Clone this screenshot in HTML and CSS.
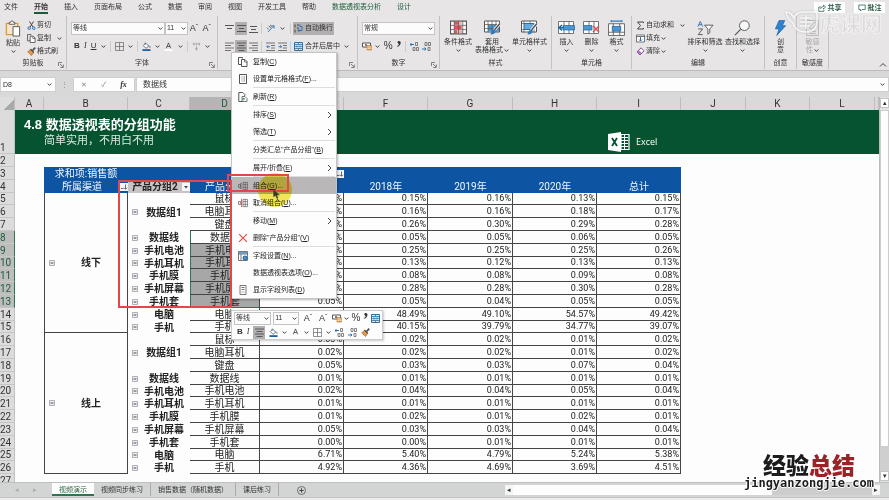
FILE: index.html
```html
<!DOCTYPE html>
<html lang="zh-CN">
<head>
<meta charset="utf-8">
<title>4.8 数据透视表的分组功能</title>
<link rel="stylesheet" href="styles.css">
</head>
<body>
<svg class="defs" aria-hidden="true">
  <symbol id="caret" viewBox="0 0 5 5"><path d="M.7 1.5 2.5 3.4 4.3 1.5" fill="none" stroke="#444" stroke-width="1"/></symbol>
  <symbol id="chev" viewBox="0 0 6 8"><path d="M1.5 1 4.5 4 1.5 7" fill="none" stroke="#444"/></symbol>
  <symbol id="launch" viewBox="0 0 6 6"><path d="M.5 4V.5H4M2 2l3 3M5.300 2.500v3h-3" fill="none" stroke="#666" stroke-width=".8"/></symbol>
  <symbol id="paste" viewBox="0 0 18 18"><path d="M2 3.500h12v12H2z" fill="#f5e6cf" stroke="#d99a3d" stroke-width="1.400"/><path d="M5 4.500V2.500h1.500a1.500 1.500 0 0 1 3 0H11v2z" fill="#fff" stroke="#555"/><path d="M9 7h7v10H9z" fill="#fff" stroke="#555"/></symbol>
  <symbol id="cut" viewBox="0 0 9 9"><path d="M2.500.5 6 6M6.500.5 3 6" stroke="#444" stroke-width="1"/><circle cx="2.200" cy="7.200" r="1.300" fill="none" stroke="#2b74b8"/><circle cx="6.800" cy="7.200" r="1.300" fill="none" stroke="#2b74b8"/></symbol>
  <symbol id="copy" viewBox="0 0 10 10"><path d="M4 7.500H.5v-7h4v1" fill="none" stroke="#555"/><path d="M3.500 2.500H7l2 2v5H3.500z" fill="#fff" stroke="#555"/><path d="M6.500 2.500V5H9" fill="none" stroke="#555" stroke-width=".8"/></symbol>
  <symbol id="brush" viewBox="0 0 10 10"><path d="m9.200.8-3 3" stroke="#555" stroke-width="2"/><path d="M4 2.500 7.500 6 5 9.500.8 5.500z" fill="#e39a4b" stroke="#9d5a21" stroke-width=".7"/><path d="M4 2.500 7.500 6" stroke="#444" stroke-width="1.300"/></symbol>
  <symbol id="grid" viewBox="0 0 10 10"><path d="M.5.5h9v9h-9zM5 .5v9M.5 5h9" fill="none" stroke="#666" stroke-width=".8"/></symbol>
  <symbol id="bucket" viewBox="0 0 10 10"><path d="M4 1.300 7.500 4.500 4.500 7 1.500 4z" fill="#fff" stroke="#444" stroke-width=".8"/><path d="M3.500 3V.8M8 4q1.500 1.500.8 2.500" fill="none" stroke="#2b74b8"/><path d="M.5 8h9v2h-9z" fill="#1c5ca8"/></symbol>
  <symbol id="fontcolor" viewBox="0 0 10 10"><path d="M2.500 7 5 1l2.500 6M3.300 5h3.400" fill="none" stroke="#444" stroke-width=".9"/><path d="M.5 8h9v2h-9z" fill="#fff"/></symbol>
  <symbol id="phonetic" viewBox="0 0 10 10"><path d="M1 3h2M4 3h2M7 3h2M1 1.500h2M4 1.500h2M7 1.500h2M5 5v2M3.500 7.500h3M5 8v1.500" stroke="#888" stroke-width=".8"/></symbol>
  <symbol id="al-top" viewBox="0 0 9 9"><path d="M0 1.500h9M2 4.500h5" stroke="#555"/></symbol>
  <symbol id="al-mid" viewBox="0 0 9 9"><path d="M0 1.500h9M2 4.500h5M0 7.500h9" stroke="#555"/></symbol>
  <symbol id="al-bot" viewBox="0 0 9 9"><path d="M0 8.500h9M2 5.500h5M1 2.500h7" stroke="#555"/></symbol>
  <symbol id="al-left" viewBox="0 0 9 9"><path d="M0 1h9M0 3.500h6M0 6h9M0 8.500h6" stroke="#555" stroke-width=".8"/></symbol>
  <symbol id="al-cen" viewBox="0 0 9 9"><path d="M0 1h9M1.500 3.500h6M0 6h9M1.500 8.500h6" stroke="#444" stroke-width=".8"/></symbol>
  <symbol id="al-right" viewBox="0 0 9 9"><path d="M0 1h9M3 3.500h6M0 6h9M3 8.500h6" stroke="#555" stroke-width=".8"/></symbol>
  <symbol id="orient" viewBox="0 0 10 10"><path d="m2 9 7-7M9 5V2H6" fill="none" stroke="#2b74b8"/><path d="m1 4 2 2M3 2l2.500 2.500M5 1l1 2" stroke="#555"/></symbol>
  <symbol id="indent" viewBox="0 0 9 9"><path d="M0 1h9M5 3.500h4M5 6h4M0 8.500h9" stroke="#555" stroke-width=".8"/><path d="M4 4.700H.8M2.300 3.200.8 4.700l1.500 1.500" fill="none" stroke="#2b74b8" stroke-width=".9"/></symbol>
  <symbol id="outdent" viewBox="0 0 9 9"><path d="M0 1h9M5 3.500h4M5 6h4M0 8.500h9" stroke="#555" stroke-width=".8"/><path d="M.5 4.700h3.200M2.200 3.200l1.500 1.500-1.500 1.500" fill="none" stroke="#2b74b8" stroke-width=".9"/></symbol>
  <symbol id="wrap" viewBox="0 0 9 9"><path d="M1 .5v3M1 5.500v3M3 1h2M3 4h2" stroke="#444"/><path d="M6 .5v2h2v4H4M5.500 5 4 6.500 5.500 8" fill="none" stroke="#2b74b8"/></symbol>
  <symbol id="merge" viewBox="0 0 9 9"><path d="M.5.5h8v8h-8z" fill="#d2e6f3" stroke="#3a6f94"/><path d="M4.500.5v2M4.500 6.500v2M.5 2.500h8M.5 6.500h8" stroke="#3a6f94" stroke-width=".8"/><path d="M1.500 4.500h6M3 3.500l-1 1 1 1M6 3.500l1 1-1 1" fill="none" stroke="#1769aa" stroke-width=".7"/></symbol>
  <symbol id="money" viewBox="0 0 10 9"><path d="M.5 1.500h8v4h-8z" fill="#fff" stroke="#555"/><circle cx="4" cy="3.500" r="1" fill="#555"/><path d="M5 4h4.500v4.500H5z" fill="#e5a24d" stroke="#b5742b" stroke-width=".6"/><path d="M5 5.500h4.500M5 7h4.500" stroke="#fff" stroke-width=".5"/></symbol>
  <symbol id="decinc" viewBox="0 0 9 9"><path d="M0 2.500h4M1.500 1 0 2.500 1.500 4" fill="none" stroke="#2b74b8"/><path d="M5.500.5h2v3h-2zM3 5.500h2v3H3zM6.500 5.500h2v3h-2z" fill="none" stroke="#666" stroke-width=".8"/></symbol>
  <symbol id="decdec" viewBox="0 0 9 9"><path d="M0 7h4M2.500 5.500 4 7 2.500 8.500" fill="none" stroke="#2b74b8"/><path d="M6 5.500h2v3H6zM3 .5h2v3H3zM6.500.5h2v3h-2z" fill="none" stroke="#666" stroke-width=".8"/></symbol>
  <symbol id="cond" viewBox="0 0 16 14"><path d="M.5.5h15v12H.5z" fill="#fff" stroke="#555"/><path d="M4 1h4v3H4zM4 5h7v3H4zM4 9h3v3H4z" fill="#dd5353"/><path d="M8 1h3v3H8zM7 9h5v3H7z" fill="#efb0b0"/><path d="M4 .5v12M8 .5v12M12 .5v12M0 4.500h16M0 8.500h16" stroke="#555" stroke-width=".7"/></symbol>
  <symbol id="tblfmt" viewBox="0 0 17 15"><path d="M.5.5h15v11H.5z" fill="#fff" stroke="#555"/><path d="M4 4h11v7H4z" fill="#4a97d2"/><path d="M4 .5v11M8 .5v11M12 .5v11M0 4h16M0 8h16" stroke="#555" stroke-width=".7"/><path d="m16 3-6 7" stroke="#fff" stroke-width="3"/><path d="m16 3-6 7" stroke="#555" stroke-width="1.500"/><path d="M10.500 9q-3 0-4 5 4.500 0 5.500-3.500z" fill="#2e7dc2"/></symbol>
  <symbol id="cellfmt" viewBox="0 0 17 15"><path d="M.5.5h15v11H.5z" fill="#fff" stroke="#555"/><path d="M3 3h10v6H3z" fill="#66a9da" stroke="#2e6f9f"/><path d="M.5 3H3M.5 9H3M3 .5V3M9 .5V3M3 9v3M13 9v3" stroke="#555" stroke-width=".7"/><path d="m16 3-6 7" stroke="#fff" stroke-width="3"/><path d="m16 3-6 7" stroke="#555" stroke-width="1.500"/><path d="M10.500 9q-3 0-4 5 4.500 0 5.500-3.500z" fill="#2e7dc2"/></symbol>
  <symbol id="ins" viewBox="0 0 17 14"><path d="M.5.5h15v12H.5zM6 .5v12M11 .5v12" fill="#fff" stroke="#555" stroke-width=".8"/><path d="M5 4.500h11.500v4.500H5z" fill="#4a97d2" stroke="#1f619b" stroke-width=".7"/><path d="M4 4 1 6.700l3 2.700M1 6.700h5" fill="none" stroke="#1769aa" stroke-width="1.500"/></symbol>
  <symbol id="del" viewBox="0 0 17 14"><path d="M.5.5h15v12H.5zM6 .5v12M11 .5v12" fill="#fff" stroke="#555" stroke-width=".8"/><path d="M0 4.500h9v4.500H0z" fill="#4a97d2" stroke="#1f619b" stroke-width=".7"/><path d="m10 5 6 6M16 5l-6 6" stroke="#e05252" stroke-width="1.500"/></symbol>
  <symbol id="fmt" viewBox="0 0 16 15"><path d="M3 1h10M3 0v2M13 0v2" stroke="#2e7dc2"/><path d="M.5 3.500h15v11H.5zM5 3.500v11M11 3.500v11M.5 11.500h15" fill="#fff" stroke="#555" stroke-width=".8"/><path d="M4 6h8v4.500H4z" fill="#4a97d2" stroke="#1f619b" stroke-width=".7"/></symbol>
  <symbol id="sigma" viewBox="0 0 8 9"><path d="M7 2V1H1l3 3.500L1 8h6V7" fill="none" stroke="#444" stroke-width="1"/></symbol>
  <symbol id="fill" viewBox="0 0 9 8"><path d="M.5.5h8v7h-8zM.5 2h8" fill="#fff" stroke="#555" stroke-width=".8"/><path d="M4.500 2.500v4M3 5l1.500 1.500L6 5" fill="none" stroke="#2b74b8"/></symbol>
  <symbol id="erase" viewBox="0 0 9 9"><path d="m5 .8 3 3-4 4.200-3-3z" fill="#fff" stroke="#8a479b"/><path d="m2.600 3.400 3 3L4 8 1 5z" fill="#b47bc2" stroke="#8a479b" stroke-width=".6"/></symbol>
  <symbol id="sort" viewBox="0 0 18 15"><path d="M1 6 3.500.5 6 6M2 4h3" fill="none" stroke="#2b74b8" stroke-width="1"/><path d="M1.300 8.500H6l-4.700 6H6" fill="none" stroke="#555"/><path d="M8 4.500h9l-3.500 4v4l-2 1.500v-5.500z" fill="#fff" stroke="#555"/></symbol>
  <symbol id="find" viewBox="0 0 17 17"><circle cx="10.500" cy="6" r="5.200" fill="#f7f7f7" stroke="#555"/><path d="m6.500 10-6 6" stroke="#555" stroke-width="1.300"/></symbol>
  <symbol id="bolt" viewBox="0 0 13 17"><path d="M5 .5h6L8.500 6H12L2.500 16.500 5 9.500H1z" fill="#2d83cf" stroke="#1d5e9f" stroke-width=".7"/></symbol>
  <symbol id="sens" viewBox="0 0 13 16"><path d="M.5.5h12v15H.5zM3 11.500h7M3 13.500h7" fill="none" stroke="#bbb"/><path d="m3 8 6-6 2 2-6 5z" fill="none" stroke="#bbb"/></symbol>
  <symbol id="share" viewBox="0 0 8 8"><path d="M3 3H.8v4.400h5V5.500M2.500 5q.5-2.500 3-2.500V1l2 2-2 2V4" fill="none" stroke="#2d6a4c" stroke-width=".8"/></symbol>
  <symbol id="note" viewBox="0 0 8 8"><path d="M.8 1h6.400v4.500H4L2.500 7V5.500H.8z" fill="none" stroke="#2d6a4c" stroke-width=".8"/></symbol>
  <symbol id="minus" viewBox="0 0 6 6"><path d="M.5.5h5v5h-5z" fill="#f1f1f4" stroke="#9a9aa2" stroke-width=".8"/><path d="M1.500 3h3" stroke="#445"/></symbol>
  <symbol id="props" viewBox="0 0 10 10"><path d="M1.500.5h7v9h-7z" fill="#fff" stroke="#555"/><path d="M3.500 3h1M3.500 5h1M3.500 7h1M5.500 3h1.500M5.500 5h1.500M5.500 7h1.500" stroke="#555" stroke-width=".8"/></symbol>
  <symbol id="refresh" viewBox="0 0 10 10"><path d="M4 9.500H.8v-9h4l2 2v1.500" fill="#fff" stroke="#555"/><path d="M4 4.500h3l2 2v3H4z" fill="#fff" stroke="#555" stroke-width=".8"/><path d="M5 8.500V6l2 1.300" fill="none" stroke="#27835a"/></symbol>
  <symbol id="group" viewBox="0 0 11 9"><path d="M5.500.5h5v8h-5zM5.500 3h5M5.500 6h5M8 .5v8" fill="none" stroke="#555" stroke-width=".7"/><path d="M4 1.500H3v6h1M.5 3H3v3H.5z" fill="none" stroke="#555" stroke-width=".8"/></symbol>
  <symbol id="ungroup" viewBox="0 0 11 9"><path d="M5.500.5h5v8h-5zM5.500 3h5M5.500 6h5M8 .5v8" fill="none" stroke="#555" stroke-width=".7"/><path d="M.5 3H3v3H.5z" fill="none" stroke="#555" stroke-width=".8"/><path d="M4 0v9" stroke="#d04545"/></symbol>
  <symbol id="cross" viewBox="0 0 9 9"><path d="m1 1 7 7M8 1 1 8" stroke="#dc4a4a" stroke-width="1"/></symbol>
  <symbol id="field" viewBox="0 0 10 10"><path d="M.5.5h9v9h-9zM.5 3h9M3 3v6.500" fill="#fff" stroke="#555" stroke-width=".8"/><path d="M1 1h8v2H1z" fill="#6c9ec6"/><circle cx="7" cy="7" r="2" fill="#4a97d2" stroke="#1f619b"/></symbol>
  <symbol id="list" viewBox="0 0 9 10"><path d="M1.500.5h6v9h-6zM3 2.500h3M3 4.500h3M3 7h1M5 7h1" fill="#fff" stroke="#555" stroke-width=".8"/></symbol>
  <symbol id="excel" viewBox="0 0 22 20"><path d="M13 2.500h8v15h-8z" fill="none" stroke="#fff" stroke-width="1.200"/><path d="M13 5.500h7M13 8.500h7M13 11.500h7M13 14.500h7M16.500 3v14" stroke="#fff" stroke-width="1"/><path d="M0 2 13 0v20L0 18z" fill="#fff"/><path d="m4 6 5 8M9 6l-5 8" stroke="#05532f" stroke-width="1.800"/></symbol>
  <symbol id="sortbtn" viewBox="0 0 8 8"><path d="M0 0h8v8H0z" fill="#f6f6f6"/><path d="M1 5.500h2.500M5.500 1.500v4.500M4 4.800l1.500 1.500L7 4.800" fill="none" stroke="#445" stroke-width=".8"/></symbol>
  <symbol id="filtbtn" viewBox="0 0 8 8"><path d="M0 0h8v8H0z" fill="#f6f6f6"/><path d="M2 3h4L4 5.500z" fill="#445"/></symbol>
</svg>

<header class="top">
  <nav class="tabs">
    <a href="#">文件</a><a href="#" class="on">开始</a><a href="#">插入</a><a href="#">页面布局</a><a href="#">公式</a><a href="#">数据</a><a href="#">审阅</a><a href="#">视图</a><a href="#">开发工具</a><a href="#">帮助</a><a href="#" class="ctx">数据透视表分析</a><a href="#" class="ctx">设计</a>
  </nav>
  <div class="actions">
    <button><svg class="i8"><use href="#share"/></svg>共享</button>
    <button><svg class="i8"><use href="#note"/></svg>批注</button>
  </div>
</header>

<section class="ribbon">
  <div class="grp g-clip">
    <div class="body">
      <button class="big"><svg class="i18"><use href="#paste"/></svg>粘贴<svg class="i5"><use href="#caret"/></svg></button>
      <div class="stack">
        <button><svg class="i9"><use href="#cut"/></svg>剪切</button>
        <button><svg class="i9"><use href="#copy"/></svg>复制<svg class="i5 far"><use href="#caret"/></svg></button>
        <button><svg class="i9"><use href="#brush"/></svg>格式刷</button>
      </div>
    </div>
    <div class="cap">剪贴板<svg class="i6"><use href="#launch"/></svg></div>
  </div>

  <div class="grp g-font">
    <div class="body rows">
      <div class="line">
        <div class="pick w95"><select aria-label="字体"><option>等线</option></select><svg class="i5"><use href="#caret"/></svg></div>
        <div class="pick w22"><select aria-label="字号"><option>11</option></select><svg class="i5"><use href="#caret"/></svg></div>
        <button class="aa">A<sup>ˆ</sup></button><button class="aa">A<sup>ˇ</sup></button>
      </div>
      <div class="line tools">
        <button class="b">B</button><button class="i">I</button><button class="u">U</button><svg class="i5"><use href="#caret"/></svg><span class="bar"></span>
        <button><svg class="i9"><use href="#grid"/></svg></button><svg class="i5"><use href="#caret"/></svg><span class="bar"></span>
        <button><svg class="i9"><use href="#bucket"/></svg></button><svg class="i5"><use href="#caret"/></svg>
        <button><svg class="i9"><use href="#fontcolor"/></svg></button><svg class="i5"><use href="#caret"/></svg><span class="bar"></span>
        <button><svg class="i9"><use href="#phonetic"/></svg></button><svg class="i5"><use href="#caret"/></svg>
      </div>
    </div>
    <div class="cap">字体<svg class="i6"><use href="#launch"/></svg></div>
  </div>

  <div class="grp g-align">
    <div class="body rows">
      <div class="line">
        <button class="sq"><svg class="i9"><use href="#al-top"/></svg></button><button class="sq sel"><svg class="i9"><use href="#al-mid"/></svg></button><button class="sq"><svg class="i9"><use href="#al-bot"/></svg></button><span class="bar"></span>
        <button class="sq"><svg class="i9"><use href="#orient"/></svg></button><button class="sq"><svg class="i5"><use href="#caret"/></svg></button><span class="bar"></span>
        <button class="wide sel"><svg class="i9"><use href="#wrap"/></svg>自动换行</button>
      </div>
      <div class="line">
        <button class="sq"><svg class="i9"><use href="#al-left"/></svg></button><button class="sq sel"><svg class="i9"><use href="#al-cen"/></svg></button><button class="sq"><svg class="i9"><use href="#al-right"/></svg></button><span class="bar"></span>
        <button class="sq"><svg class="i9"><use href="#indent"/></svg></button><button class="sq"><svg class="i9"><use href="#outdent"/></svg></button><span class="bar"></span>
        <button class="wide"><svg class="i9"><use href="#merge"/></svg>合并后居中<svg class="i5 far"><use href="#caret"/></svg></button>
      </div>
    </div>
    <div class="cap"><svg class="i6"><use href="#launch"/></svg></div>
  </div>

  <div class="grp g-num">
    <div class="body rows">
      <div class="line"><div class="pick w74"><select aria-label="数字格式"><option>常规</option></select><svg class="i5"><use href="#caret"/></svg></div></div>
      <div class="line num">
        <button><svg class="i10"><use href="#money"/></svg></button><svg class="i5"><use href="#caret"/></svg>
        <button class="pct">%</button><button class="comma">’</button><span class="bar"></span>
        <button><svg class="i9"><use href="#decinc"/></svg></button><button><svg class="i9"><use href="#decdec"/></svg></button>
      </div>
    </div>
    <div class="cap">数字<svg class="i6"><use href="#launch"/></svg></div>
  </div>

  <div class="grp g-style">
    <div class="body">
      <button class="big"><svg class="i17"><use href="#cond"/></svg>条件格式<svg class="i5"><use href="#caret"/></svg></button>
      <button class="big"><svg class="i17"><use href="#tblfmt"/></svg>套用<span>表格格式<svg class="i5"><use href="#caret"/></svg></span></button>
      <button class="big"><svg class="i17"><use href="#cellfmt"/></svg>单元格样式<svg class="i5"><use href="#caret"/></svg></button>
    </div>
    <div class="cap">样式</div>
  </div>

  <div class="grp g-cell">
    <div class="body">
      <button class="big"><svg class="i17"><use href="#ins"/></svg>插入<svg class="i5"><use href="#caret"/></svg></button>
      <button class="big"><svg class="i17"><use href="#del"/></svg>删除<svg class="i5"><use href="#caret"/></svg></button>
      <button class="big"><svg class="i17"><use href="#fmt"/></svg>格式<svg class="i5"><use href="#caret"/></svg></button>
    </div>
    <div class="cap">单元格</div>
  </div>

  <div class="grp g-edit">
    <div class="body">
      <div class="stack">
        <button><svg class="i9"><use href="#sigma"/></svg>自动求和<svg class="i5 far"><use href="#caret"/></svg></button>
        <button><svg class="i9"><use href="#fill"/></svg>填充<svg class="i5"><use href="#caret"/></svg></button>
        <button><svg class="i9"><use href="#erase"/></svg>清除<svg class="i5"><use href="#caret"/></svg></button>
      </div>
      <button class="big"><svg class="i17"><use href="#sort"/></svg>排序和筛选<svg class="i5"><use href="#caret"/></svg></button>
      <button class="big"><svg class="i17"><use href="#find"/></svg>查找和选择<svg class="i5"><use href="#caret"/></svg></button>
    </div>
    <div class="cap">编辑</div>
  </div>

  <div class="grp g-idea">
    <div class="body"><button class="big"><svg class="i17"><use href="#bolt"/></svg>创<span>意</span></button></div>
    <div class="cap">创意</div>
  </div>
  <div class="grp g-idea">
    <div class="body"><button class="big off" disabled><svg class="i17"><use href="#sens"/></svg>敏感<span>性<svg class="i5"><use href="#caret"/></svg></span></button></div>
    <div class="cap">敏感度</div>
  </div>
  <button class="fold" aria-label="折叠功能区"><svg class="i8 up"><use href="#chev"/></svg></button>
</section>

<section class="fbar">
  <div class="name"><input aria-label="名称框" value="D8"><svg class="i5"><use href="#caret"/></svg></div>
  <span class="dots">⋮</span>
  <div class="fx"><button>✕</button><button>✓</button><button class="f">fx</button></div>
  <div class="val"><input aria-label="编辑栏" value="数据线"><svg class="i5"><use href="#caret"/></svg></div>
</section>

<main class="work">
<div class="sheet">
<table>
<colgroup><col class="c15"><col class="c29"><col class="c84"><col class="c62"><col class="c70"><col class="c84"><col class="c84"><col class="c85"><col class="c84"><col class="c84"><col class="c65"><col class="c64"><col class="c65"><col></colgroup>
<thead><tr class="cols"><th class="corner"></th><th>A</th><th>B</th><th>C</th><th class="hot">D</th><th>E</th><th>F</th><th>G</th><th>H</th><th>I</th><th>J</th><th>K</th><th>L</th><th></th></tr></thead>
<tbody>
<tr class="banner"><th class="rh">1</th><td colspan="13"><div class="title"><div><h1>4.8 数据透视表的分组功能</h1><p>简单实用，不用白不用</p></div><div class="brand"><svg class="i22"><use href="#excel"/></svg>Excel</div></div></td></tr>
<tr><th class="rh">2</th><td colspan="13"></td></tr>
<tr><th class="rh">3</th><td></td><td class="blue">求和项:销售额</td><td class="blue"></td><td class="blue"></td><td class="blue end"><button><svg class="i8"><use href="#sortbtn"/></svg></button></td><td class="blue"></td><td class="blue"></td><td class="blue"></td><td class="blue"></td></tr>
<tr><th class="rh">4</th><td></td><th class="blue"><div class="cell"><span>所属渠道</span><button><svg class="i8"><use href="#sortbtn"/></svg></button></div></th><th class="grey"><div class="cell"><span>产品分组2</span><button><svg class="i8"><use href="#filtbtn"/></svg></button></div></th><th class="blue">产品分组</th><th class="blue"></th><th class="blue">2018年</th><th class="blue">2019年</th><th class="blue">2020年</th><th class="blue">总计</th></tr>
<tr><th class="rh">5</th><td></td><th class="chan" rowspan="11"><div class="cell"><button><svg class="i6"><use href="#minus"/></svg></button><span>线下</span></div></th><th class="sub" rowspan="3"><div class="cell"><button><svg class="i6"><use href="#minus"/></svg></button><span>数据组1</span></div></th><td class="item">鼠标</td><td>0.15%</td><td>0.15%</td><td>0.16%</td><td>0.13%</td><td>0.15%</td></tr>
<tr><th class="rh">6</th><td></td><td class="item">电脑耳机</td><td>0.17%</td><td>0.16%</td><td>0.16%</td><td>0.18%</td><td>0.17%</td></tr>
<tr><th class="rh">7</th><td></td><td class="item">键盘</td><td>0.27%</td><td>0.26%</td><td>0.30%</td><td>0.29%</td><td>0.28%</td></tr>
<tr><th class="rh hot">8</th><td></td><th class="sub"><div class="cell"><button><svg class="i6"><use href="#minus"/></svg></button><span>数据线</span></div></th><td class="item s first">数据线</td><td>0.05%</td><td>0.05%</td><td>0.05%</td><td>0.06%</td><td>0.05%</td></tr>
<tr><th class="rh hot">9</th><td></td><th class="sub"><div class="cell"><button><svg class="i6"><use href="#minus"/></svg></button><span>手机电池</span></div></th><td class="item s">手机电池</td><td>0.26%</td><td>0.25%</td><td>0.25%</td><td>0.25%</td><td>0.26%</td></tr>
<tr><th class="rh hot">10</th><td></td><th class="sub"><div class="cell"><button><svg class="i6"><use href="#minus"/></svg></button><span>手机耳机</span></div></th><td class="item s">手机耳机</td><td>0.13%</td><td>0.13%</td><td>0.12%</td><td>0.13%</td><td>0.13%</td></tr>
<tr><th class="rh hot">11</th><td></td><th class="sub"><div class="cell"><button><svg class="i6"><use href="#minus"/></svg></button><span>手机膜</span></div></th><td class="item s">手机膜</td><td>0.08%</td><td>0.08%</td><td>0.08%</td><td>0.09%</td><td>0.08%</td></tr>
<tr><th class="rh hot">12</th><td></td><th class="sub"><div class="cell"><button><svg class="i6"><use href="#minus"/></svg></button><span>手机屏幕</span></div></th><td class="item s">手机屏幕</td><td>0.28%</td><td>0.28%</td><td>0.28%</td><td>0.30%</td><td>0.28%</td></tr>
<tr><th class="rh hot">13</th><td></td><th class="sub"><div class="cell"><button><svg class="i6"><use href="#minus"/></svg></button><span>手机套</span></div></th><td class="item s last">手机套</td><td>0.05%</td><td>0.05%</td><td>0.04%</td><td>0.05%</td><td>0.05%</td></tr>
<tr><th class="rh">14</th><td></td><th class="sub"><div class="cell"><button><svg class="i6"><use href="#minus"/></svg></button><span>电脑</span></div></th><td class="item">电脑</td><td></td><td>48.49%</td><td>49.10%</td><td>54.57%</td><td>49.42%</td></tr>
<tr><th class="rh">15</th><td></td><th class="sub"><div class="cell"><button><svg class="i6"><use href="#minus"/></svg></button><span>手机</span></div></th><td class="item">手机</td><td></td><td>40.15%</td><td>39.79%</td><td>34.77%</td><td>39.07%</td></tr>
<tr><th class="rh">16</th><td></td><th class="chan" rowspan="11"><div class="cell"><button><svg class="i6"><use href="#minus"/></svg></button><span>线上</span></div></th><th class="sub" rowspan="3"><div class="cell"><button><svg class="i6"><use href="#minus"/></svg></button><span>数据组1</span></div></th><td class="item">鼠标</td><td>0.03%</td><td>0.02%</td><td>0.02%</td><td>0.01%</td><td>0.02%</td></tr>
<tr><th class="rh">17</th><td></td><td class="item">电脑耳机</td><td>0.02%</td><td>0.02%</td><td>0.02%</td><td>0.01%</td><td>0.02%</td></tr>
<tr><th class="rh">18</th><td></td><td class="item">键盘</td><td>0.05%</td><td>0.03%</td><td>0.03%</td><td>0.07%</td><td>0.04%</td></tr>
<tr><th class="rh">19</th><td></td><th class="sub"><div class="cell"><button><svg class="i6"><use href="#minus"/></svg></button><span>数据线</span></div></th><td class="item">数据线</td><td>0.01%</td><td>0.01%</td><td>0.01%</td><td>0.01%</td><td>0.01%</td></tr>
<tr><th class="rh">20</th><td></td><th class="sub"><div class="cell"><button><svg class="i6"><use href="#minus"/></svg></button><span>手机电池</span></div></th><td class="item">手机电池</td><td>0.02%</td><td>0.04%</td><td>0.04%</td><td>0.05%</td><td>0.04%</td></tr>
<tr><th class="rh">21</th><td></td><th class="sub"><div class="cell"><button><svg class="i6"><use href="#minus"/></svg></button><span>手机耳机</span></div></th><td class="item">手机耳机</td><td>0.01%</td><td>0.01%</td><td>0.01%</td><td>0.01%</td><td>0.01%</td></tr>
<tr><th class="rh">22</th><td></td><th class="sub"><div class="cell"><button><svg class="i6"><use href="#minus"/></svg></button><span>手机膜</span></div></th><td class="item">手机膜</td><td>0.01%</td><td>0.02%</td><td>0.01%</td><td>0.02%</td><td>0.01%</td></tr>
<tr><th class="rh">23</th><td></td><th class="sub"><div class="cell"><button><svg class="i6"><use href="#minus"/></svg></button><span>手机屏幕</span></div></th><td class="item">手机屏幕</td><td>0.05%</td><td>0.03%</td><td>0.03%</td><td>0.04%</td><td>0.04%</td></tr>
<tr><th class="rh">24</th><td></td><th class="sub"><div class="cell"><button><svg class="i6"><use href="#minus"/></svg></button><span>手机套</span></div></th><td class="item">手机套</td><td>0.00%</td><td>0.00%</td><td>0.01%</td><td>0.01%</td><td>0.01%</td></tr>
<tr><th class="rh">25</th><td></td><th class="sub"><div class="cell"><button><svg class="i6"><use href="#minus"/></svg></button><span>电脑</span></div></th><td class="item">电脑</td><td>6.71%</td><td>5.40%</td><td>4.79%</td><td>5.24%</td><td>5.38%</td></tr>
<tr><th class="rh">26</th><td></td><th class="sub"><div class="cell"><button><svg class="i6"><use href="#minus"/></svg></button><span>手机</span></div></th><td class="item">手机</td><td>4.92%</td><td>4.36%</td><td>4.69%</td><td>3.69%</td><td>4.51%</td></tr>
<tr><th class="rh">27</th><td colspan="13"></td></tr>
</tbody>
</table>
</div>
<div class="vscroll"><button aria-label="向上">▴</button><div class="thumb"></div><div class="rest"></div><button aria-label="向下">▾</button></div>
</main>

<footer class="foot">
  <div class="arrows"><button aria-label="上一张">◂</button><button aria-label="下一张">▸</button></div>
  <nav class="sheets"><a href="#" class="on">视频演示</a><a href="#">视频同步练习</a><a href="#">销售数据（随机数据）</a><a href="#">课后练习</a></nav>
  <button class="plus" aria-label="新工作表"><svg class="i9" viewBox="0 0 9 9"><circle cx="4.500" cy="4.500" r="4" fill="none" stroke="#555" stroke-width=".8"/><path d="M4.500 2.300v4.400M2.300 4.500h4.400" stroke="#444"/></svg></button>
  <div class="hscroll"><button aria-label="向左">◂</button><div class="thumb"></div><div class="rest"></div><button aria-label="向右">▸</button></div>
</footer>
<div class="status"></div>

<div class="menu" role="menu">
  <button><svg class="i10"><use href="#copy"/></svg><span>复制(<u>C</u>)</span></button>
  <button><svg class="i10"><use href="#props"/></svg><span>设置单元格格式(<u>F</u>)...</span></button>
  <hr>
  <button><svg class="i10"><use href="#refresh"/></svg><span>刷新(<u>R</u>)</span></button>
  <hr>
  <button><i></i><span>排序(<u>S</u>)</span><svg class="i7"><use href="#chev"/></svg></button>
  <button><i></i><span>筛选(<u>T</u>)</span><svg class="i7"><use href="#chev"/></svg></button>
  <hr>
  <button><i></i><span>分类汇总"产品分组"(<u>B</u>)</span></button>
  <hr>
  <button><i></i><span>展开/折叠(<u>E</u>)</span><svg class="i7"><use href="#chev"/></svg></button>
  <hr>
  <button class="hover"><svg class="i10"><use href="#group"/></svg><span>组合(<u>G</u>)...</span></button>
  <button><svg class="i10"><use href="#ungroup"/></svg><span>取消组合(<u>U</u>)...</span></button>
  <hr>
  <button><i></i><span>移动(<u>M</u>)</span><svg class="i7"><use href="#chev"/></svg></button>
  <button><svg class="i10"><use href="#cross"/></svg><span>删除"产品分组"(<u>V</u>)</span></button>
  <hr>
  <button><svg class="i10"><use href="#field"/></svg><span>字段设置(<u>N</u>)...</span></button>
  <button><i></i><span>数据透视表选项(<u>O</u>)...</span></button>
  <button><svg class="i10"><use href="#list"/></svg><span>显示字段列表(<u>D</u>)</span></button>
</div>

<div class="mini">
  <div class="line">
    <div class="pick w37"><select aria-label="浮动字体"><option>等线</option></select><svg class="i5"><use href="#caret"/></svg></div>
    <div class="pick w28"><select aria-label="浮动字号"><option>11</option></select><svg class="i5"><use href="#caret"/></svg></div>
    <button class="aa">A<sup>ˆ</sup></button><button class="aa">A<sup>ˇ</sup></button>
    <button><svg class="i10"><use href="#money"/></svg></button><svg class="i5"><use href="#caret"/></svg>
    <button class="pct">%</button><button class="comma">’</button><button><svg class="i9"><use href="#merge"/></svg></button>
  </div>
  <div class="line tools">
    <button class="b">B</button><button class="i">I</button><button class="sq sel"><svg class="i9"><use href="#al-cen"/></svg></button>
    <button><svg class="i9"><use href="#bucket"/></svg></button><svg class="i5"><use href="#caret"/></svg>
    <button><svg class="i9"><use href="#fontcolor"/></svg></button><svg class="i5"><use href="#caret"/></svg>
    <button><svg class="i9"><use href="#grid"/></svg></button><svg class="i5"><use href="#caret"/></svg>
    <button><svg class="i9"><use href="#decinc"/></svg></button><button><svg class="i9"><use href="#decdec"/></svg></button><button><svg class="i9"><use href="#brush"/></svg></button>
  </div>
</div>

<div class="glow"></div>
<div class="mark mark-cols"></div>
<div class="mark mark-item"></div>
<svg class="cursor" viewBox="0 0 7 10"><path d="M.5.5v7.500l2-1.500 1.300 3 1.300-.6-1.300-2.800H6.500z" fill="#3a3a22" stroke="#555" stroke-width=".4"/></svg>

<div class="wm-top"><svg viewBox="0 0 34 24"><path d="M1 2q5 0 8 6 2-6 9-6h14v8q0 12-11 12T8 13Q2 9 1 2z" fill="none" stroke="#fff" stroke-width="1.500"/><path d="M15 8h12M15 12h12M15 16h10M21 5v14" stroke="#fff" stroke-width="1.500"/></svg>虎课网</div>
<div class="wm-site"><div class="cn">经验<em>总结</em></div><div class="url">jingyanzongjie.com</div></div>
</body>
</html>
```
FILE: styles.css
```css
* { box-sizing: border-box; }
html, body { height: 100%; }
body {
  margin: 0;
  display: flex;
  flex-direction: column;
  position: relative;
  overflow: hidden;
  background: #e7e5e5;
  color: #333;
  font: 7px/10px "Liberation Sans", "Noto Sans CJK SC", sans-serif;
}
a { color: inherit; text-decoration: none; }
button {
  margin: 0; padding: 0; border: 0; background: none;
  font: inherit; color: inherit;
  display: flex; align-items: center; justify-content: center;
}
input, select {
  appearance: none; border: 0; margin: 0; padding: 0; background: none;
  font: inherit; color: inherit; min-width: 0; flex: 1; outline: 0;
}
svg { display: block; flex: none; }
.defs { position: absolute; width: 0; height: 0; }
.i5 { width: 5px; height: 5px; }
.i6 { width: 6px; height: 6px; }
.i7 { width: 7px; height: 8px; }
.i8 { width: 8px; height: 8px; }
.i9 { width: 9px; height: 9px; }
.i10 { width: 10px; height: 10px; }
.i17 { width: 17px; height: 16px; }
.i18 { width: 18px; height: 17px; }
.i22 { width: 22px; height: 20px; }

.top { display: flex; justify-content: space-between; height: 16px; padding: 2px 4px 0; }
.tabs { display: flex; gap: 16px; }
.tabs a { height: 12px; white-space: nowrap; }
.tabs .on { font-weight: bold; border-bottom: 2px solid #1c5c3c; }
.tabs .ctx { color: #23603f; }
.actions { display: flex; gap: 9px; }
.actions button { background: #fff; width: 31px; height: 11px; gap: 2px; font-weight: bold; color: #2d5a44; }

.ribbon { display: flex; height: 55px; border-bottom: 1px solid #bdbbbb; position: relative; }
.grp { display: flex; flex-direction: column; min-width: 0; position: relative; padding: 2px 4px 0; border-right: 1px solid #c3c1c1; height: 53px; }
.body { display: flex; justify-content: space-between; height: 41px; }
.body.rows { flex-direction: column; justify-content: flex-start; padding-top: 3px; gap: 4px; }
.cap { display: flex; justify-content: center; line-height: 12px; }
.cap .i6 { position: absolute; right: 2px; bottom: 1px; }
.g-clip { flex: 0 0 67px; }
.g-font { flex: 0 0 151px; }
.g-align { flex: 0 0 140px; }
.g-num { flex: 0 0 82px; }
.g-style { flex: 0 0 112px; }
.g-cell { flex: 0 0 80px; }
.g-edit { flex: 0 0 133px; }
.g-idea { flex: 0 0 32px; }
.g-idea .body { justify-content: center; }
.g-cell .body { padding: 0 2px; }
.big { flex-direction: column; justify-content: flex-start; padding-top: 2px; line-height: 8px; white-space: nowrap; }
.big > svg:first-child { margin-bottom: 2px; }
.big .i5 { margin-top: 2px; }
.big span { display: flex; gap: 1px; }
.off { color: #aaa; }
.stack { display: flex; flex-direction: column; align-items: flex-start; gap: 3px; padding-top: 2px; }
.stack button { gap: 1px; white-space: nowrap; }
.stack .far { margin-left: 5px; }
.wide .far { margin-left: 2px; }
.line { display: flex; align-items: center; height: 14px; }
.tools { justify-content: space-between; padding: 0 3px; }
.bar { width: 1px; height: 11px; background: #ccc; }
.pick { display: flex; align-items: center; background: #fcfcfc; border: 1px solid #c4c4c4; height: 13px; padding: 0 1px; }
.pick select { height: 11px; }
.w95 { width: 96px; }
.w22 { width: 23px; }
.w74 { width: 74px; }
.w37 { width: 37px; }
.w28 { width: 26px; }
.aa { font-size: 9px; width: 13px; }
.aa sup { font-size: 7px; line-height: 7px; align-self: flex-start; }
.b { font-weight: bold; font-size: 8px; }
.i { font: italic 8px/10px "Liberation Serif", serif; }
.u { text-decoration: underline; font-size: 8px; }
.pct { font-size: 10px; }
.comma { height: 14px; padding-top: 4px; font: bold 18px/14px "Liberation Serif", serif; }
.g-align .body { padding-left: 1px; }
.sq { width: 12px; height: 13px; }
.sel { background: #b1afaf; }
.g-align .bar { margin: 0 2px; }
.wide { height: 13px; gap: 2px; padding: 0 1px; white-space: nowrap; }
.num { justify-content: space-between; padding-right: 4px; }
.fold { position: absolute; right: 2px; bottom: 1px; }
.up { transform: rotate(-90deg); }

.fbar { display: flex; height: 26px; padding: 6px 0 5px; background: #d8d8d8; }
.fbar > div { display: flex; align-items: center; background: #fdfdfd; border: 1px solid #cfcfcf; }
.name { width: 56px; padding: 0 3px 0 2px; }
.dots { width: 17px; text-align: center; line-height: 15px; color: #888; }
.fx { width: 62px; justify-content: space-around; margin-right: 1px; color: #888; }
.fx .f { font: italic bold 8px/10px "Liberation Serif", serif; color: #333; }
.val { flex: 1; padding: 0 3px 0 6px; font-size: 8px; }

.work { display: flex; flex: 1; min-height: 0; background: #fdfdfd; }
.sheet { flex: 1; min-width: 0; overflow: hidden; }
table { width: 100%; table-layout: fixed; border-collapse: separate; border-spacing: 0; font: 10px/11px Roboto, "Noto Sans CJK SC", sans-serif; color: #222; }
.c15 { width: 15px; } .c29 { width: 29px; } .c62 { width: 62px; } .c64 { width: 64px; } .c65 { width: 65px; }
.c70 { width: 70px; } .c84 { width: 84px; } .c85 { width: 85px; }
th, td { padding: 0; white-space: nowrap; }
th { font-weight: normal; }
tr { height: 13px; }
tbody tr:nth-child(5n) { height: 12px; }
.cols th { height: 13px; background: #d9d9d9; border-right: 1px solid #bdbdbd; font: 10px/12px Roboto, sans-serif; color: #333; }
.cols .hot { background: #b5b5b5; color: #1f5b3c; }
.cols .corner { background: linear-gradient(135deg, #dedede 60%, #a9a9a9 60%); }
.rh { background: #dcdcdc; border-right: 1px solid #c0c0c0; border-bottom: 1px solid #c6c6c6; text-align: left; color: #333; }
.rh.hot { background: #bdbdbd; border-right: 1px solid #2c7550; color: #1f5b3c; }
tbody .banner { height: 44px; }
.banner .rh { vertical-align: bottom; }
.banner td { background: #05532f; color: #fff; font-family: "Liberation Sans", "Noto Sans CJK SC", sans-serif; }
.title { display: grid; grid-template-columns: 593px 1fr; padding-left: 9px; align-items: end; height: 43px; }
.title > div:first-child { align-self: center; }
h1 { margin: 0; font-size: 13px; line-height: 16px; }
.title p { margin: 0; padding-left: 20px; font-size: 11px; line-height: 14px; color: #dce8e0; }
.brand { display: flex; align-items: center; justify-self: start; gap: 6px; padding: 0 0 2px; margin-left: -9px; font: 9px/12px "Open Sans", sans-serif; }
.blue { background: #0d54a3; color: #f2f6fc; text-align: center; }
.grey { background: #c9c3c5; font-weight: bold; }
.end button { margin-left: auto; }
.cell { display: flex; align-items: center; }
.cell span { flex: 1; text-align: center; }
.chan, .sub { font-weight: bold; }
.chan button, .sub button { margin-left: 4px; }
.chan { border: solid #444; border-width: 0 1px 1px; }
.item { text-align: center; border-bottom: 1px solid #444; border-right: 1px solid #444; }
.item ~ td { font-size: 9px; text-align: right; padding-right: 1px; border-bottom: 1px solid #444; border-right: 1px solid #444; }
.s { background: #a7a7a7; border-left: 1px solid #2c7550; }
.s.first { background: #fdfdfd; }
.s.last { border-bottom-color: #2c7550; }

.vscroll { width: 10px; display: flex; flex-direction: column; border-left: 1px solid #bbb; background: #e3e3e3; padding: 1px 0; }
.vscroll button { height: 10px; background: #fff; border: 1px solid #c4c4c4; }
.vscroll .thumb { flex: 14; margin-top: 2px; background: #fdfdfd; border: 1px solid #ccc; }
.vscroll .rest { flex: 1; background: #cfcfcf; }

.foot { display: flex; align-items: center; height: 15px; background: #d3d5d4; border-top: 1px solid #c0c0c0; }
.arrows { display: flex; width: 52px; justify-content: space-evenly; color: #aaa; }
.sheets { display: flex; height: 14px; line-height: 13px; }
.sheets a { padding: 0 7px; border-right: 1px solid #aaa; white-space: nowrap; height: 13px; }
.sheets .on { background: #fdfdfd; color: #2a6a49; border-right: 0; border-bottom: 2px solid #2c7550; }
.plus { margin-left: 18px; }
.hscroll { display: flex; height: 10px; flex: 0 0 375px; margin-left: auto; margin-right: 9px; background: #e0e0e0; }
.hscroll button { width: 8px; background: #f5f5f5; }
.hscroll .thumb { flex: 26; background: #fdfdfd; }
.hscroll .rest { flex: 10; background: #cdcdcd; }
.status { height: 3px; background: #ececec; border-top: 1px solid #c4c4c4; }

.menu { position: absolute; left: 231px; top: 52px; width: 106px; background: #fdfdfd; border: 1px solid #c4c4c4; box-shadow: 1px 1px 2px #0004; color: #222; }
.menu button { width: 100%; height: 17px; padding: 0 3px 0 6px; gap: 5px; }
.menu span { flex: 1; text-align: left; white-space: nowrap; }
.menu i { width: 10px; }
.menu hr { margin: 0 1px 0 21px; border: 0; height: 1px; background: #ddd; }
.menu .hover { background: #b9b7b7; }

.mini { position: absolute; left: 231px; top: 310px; width: 152px; padding: 0 2px; background: #fdfdfd; border: 1px solid #ccc; box-shadow: 1px 1px 2px #0003; }
.mini .line { justify-content: space-between; }
.mini .tools { padding: 0 10px 0 3px; }

.mark { position: absolute; border: 2px solid #e2484a; }
.mark-cols { left: 118px; top: 180px; width: 114px; height: 128px; }
.mark-item { left: 227px; top: 174px; width: 62px; height: 18px; }
.glow { position: absolute; left: 258px; top: 173px; width: 34px; height: 34px; border-radius: 50%; background: #f0e23a; mix-blend-mode: multiply; opacity: .85; }
.cursor { position: absolute; left: 273px; top: 189px; width: 7px; height: 10px; }

.wm-top { position: absolute; right: 7px; top: 9px; display: flex; align-items: center; font: bold 21px/26px "Noto Sans CJK SC", sans-serif; color: #d5d3d3; -webkit-text-stroke: 1px #f6f5f5; opacity: .75; }
.wm-top svg { width: 34px; height: 24px; filter: drop-shadow(0 0 1px #aaa); }
.wm-site { position: absolute; right: 15px; bottom: 10px; text-align: center; color: #1c1c1c; text-shadow: 1px 0 #fff, -1px 0 #fff, 0 1px #fff, 0 -1px #fff; }
.wm-site .cn { font: 900 23px/24px "Noto Sans CJK SC", sans-serif; }
.wm-site em { font-style: normal; color: #9b2226; }
.wm-site .url { font: bold 12px/14px "DejaVu Sans Mono", monospace; }
```
